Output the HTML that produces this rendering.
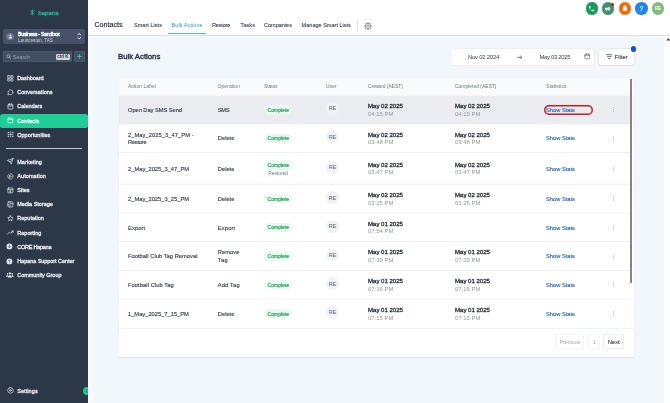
<!DOCTYPE html>
<html lang="en"><head><meta charset="utf-8"><title>Bulk Actions - Contacts</title>
<style>
html,body{margin:0;padding:0;}
body{width:670px;height:403px;overflow:hidden;position:relative;background:#f2f7fb;font-family:'Liberation Sans',sans-serif;}
.abs,.t,.row,.badge,.av,.kb,.ic{position:absolute;}
.t{white-space:pre;line-height:10px;height:10px;}
#side{left:0;top:0;width:88px;height:403px;background:#2c3848;}
#hdr{left:88px;top:0;width:582px;height:35px;background:#ffffff;border-bottom:1px solid #dcdfe4;}
#card{left:119px;top:79px;width:514.5px;height:278px;background:#fff;border-radius:1.5px;box-shadow:0 1px 1.6px rgba(40,60,90,0.11);}
#thead{left:119px;top:79px;width:514.5px;height:16.2px;background:#f8fafc;border-radius:1.5px 1.5px 0 0;}
.row{left:119px;width:514.5px;box-shadow:inset 0 -0.6px 0 #e4e7ec;}
.badge{left:264.4px;width:27.8px;height:9.4px;border-radius:4.7px;background:#eaf9f1;}
.av{left:326.1px;width:12.6px;height:12.6px;border-radius:6.3px;background:#f2f3f6;}
.kb{left:612.9px;width:1px;height:5.2px;}
.kb i{display:block;width:0.8px;height:0.9px;margin-bottom:1.1px;background:#a9afb9;border-radius:0.5px;}
.ic{left:6.6px;width:6.8px;height:6.8px;overflow:visible;}
.ic *{vector-effect:none;}
.circ{position:absolute;width:12.3px;height:12.3px;border-radius:6.2px;top:2.35px;}
#root{position:absolute;left:0;top:0;width:670px;height:403px;will-change:transform;}
</style></head><body><div id="root">
<!-- sidebar -->
<div id="side" class="abs"></div>
<div class="abs" style="left:0;top:113.6px;width:88px;height:14px;background:#1fce96;border-radius:2.5px;"></div>
<div class="abs" style="left:3px;top:28.6px;width:82px;height:15.6px;background:#475266;border-radius:2.5px;"></div>
<div class="abs" style="left:6.4px;top:33px;width:7.2px;height:7.2px;border-radius:3.6px;background:#6a7587;"></div>
<svg class="abs" style="left:7.6px;top:34.1px;width:4.8px;height:4.8px" viewBox="0 0 24 24"><circle cx="12" cy="8" r="5" fill="#d7dde6"/><path d="M3 22c0-6 4-9 9-9s9 3 9 9z" fill="#d7dde6"/></svg>
<svg class="abs" style="left:77.4px;top:32.4px;width:4.4px;height:8.4px" viewBox="0 0 8 16" fill="none" stroke="#ffffff" stroke-width="1.7" stroke-linecap="round" stroke-linejoin="round"><path d="M1.500 5.500 4 2.600 6.500 5.500M1.500 10.500 4 13.400 6.500 10.500"/></svg>
<div class="abs" style="left:3px;top:51px;width:68.8px;height:11px;background:#434e61;border-radius:2px;box-shadow:inset 0 0 0 0.6px #566176;"></div>
<svg class="abs" style="left:5.6px;top:53.8px;width:5.2px;height:5.2px" viewBox="0 0 24 24" fill="none" stroke="#b8c1ce" stroke-width="3" stroke-linecap="round"><circle cx="10.5" cy="10.5" r="7"/><path d="M16 16l6 6"/></svg>
<div class="abs" style="left:55.6px;top:53.6px;width:14.4px;height:6px;background:#cfd6e0;border-radius:1px;"></div>
<div class="abs" style="left:74.4px;top:51px;width:10.8px;height:11px;background:#434e61;border-radius:2px;box-shadow:inset 0 0 0 0.6px #566176;"></div>
<svg class="abs" style="left:77.3px;top:54px;width:4.8px;height:4.8px" viewBox="0 0 24 24" fill="none" stroke="#25d39a" stroke-width="5" stroke-linecap="round"><path d="M12 3v18M3 12h18"/></svg>
<div class="abs" style="left:6px;top:148.1px;width:76px;height:0.7px;background:#c3cad5;"></div>
<!-- logo mark -->
<svg class="abs" style="left:28.8px;top:9.4px;width:6.6px;height:6.6px" viewBox="0 0 24 24" fill="none" stroke="#1fb897" stroke-width="3.2" stroke-linecap="round"><path d="M12 3v19M12 12 4.500 5.500M12 12l7.500-6.500M12 13l-6 5M12 13l6 5"/></svg>
<svg class='ic' style='top:74.70px' viewBox='0 0 24 24' fill='none' stroke='#dde2ea' stroke-width='2.5' stroke-linecap='round' stroke-linejoin='round'><rect x='2.500' y='2.500' width='8' height='8' rx='1'/><rect x='13.500' y='2.500' width='8' height='8' rx='1'/><rect x='2.500' y='13.500' width='8' height='8' rx='1'/><rect x='13.500' y='13.500' width='8' height='8' rx='1'/></svg>
<svg class='ic' style='top:88.90px' viewBox='0 0 24 24' fill='none' stroke='#dde2ea' stroke-width='2.6' stroke-linecap='round' stroke-linejoin='round'><path d='M21 11.500a8.380 8.380 0 0 1-.900 3.800 8.500 8.500 0 0 1-7.600 4.700 8.380 8.380 0 0 1-3.800-.900L3 21l1.900-5.700a8.380 8.380 0 0 1-.900-3.800 8.500 8.500 0 0 1 4.700-7.600 8.380 8.380 0 0 1 3.800-.900h.500a8.480 8.480 0 0 1 8 8z'/></svg>
<svg class='ic' style='top:103.00px' viewBox='0 0 24 24' fill='none' stroke='#dde2ea' stroke-width='2.6' stroke-linecap='round' stroke-linejoin='round'><rect x='3.500' y='4.500' width='17' height='17' rx='2.500'/><path d='M3.500 10.500h17M8.500 2.500v4M15.500 2.500v4'/></svg>
<svg class='ic' style='top:117.20px' viewBox='0 0 24 24' fill='none' stroke='#e8fbf3' stroke-width='2.6' stroke-linecap='round' stroke-linejoin='round'><rect x='3.500' y='3.500' width='17' height='17' rx='2.500'/><path d='M3.500 9h17'/></svg>
<svg class='ic' style='top:131.30px' viewBox='0 0 24 24' fill='none' stroke='#dde2ea' stroke-width='2.5' stroke-linecap='round' stroke-linejoin='round'><circle cx='12' cy='12' r='2.200'/><circle cx='4.500' cy='5.500' r='1.400'/><circle cx='19.500' cy='5.500' r='1.400'/><circle cx='4.500' cy='18.500' r='1.400'/><circle cx='19.500' cy='18.500' r='1.400'/><path d='M12 3v3M12 18v3M3 12h3M18 12h3'/></svg>
<svg class='ic' style='top:158.20px' viewBox='0 0 24 24' fill='none' stroke='#dde2ea' stroke-width='2.5' stroke-linecap='round' stroke-linejoin='round'><path d='M21.500 2.500 10.500 13.500M21.500 2.500l-7 19-4-8-8-4z'/></svg>
<svg class='ic' style='top:172.50px' viewBox='0 0 24 24' fill='none' stroke='#dde2ea' stroke-width='2.5' stroke-linecap='round' stroke-linejoin='round'><path d='M5.280 5.280A9.500 9.500 0 1 0 12 2.500'/><path d='M10 8.500l5.500 3.500-5.500 3.500z'/></svg>
<svg class='ic' style='top:186.60px' viewBox='0 0 24 24' fill='none' stroke='#dde2ea' stroke-width='2.5' stroke-linecap='round' stroke-linejoin='round'><rect x='3' y='3.500' width='18' height='17' rx='2'/><path d='M3 8.500h18M12 11.500v6M9.200 15l2.800 2.800 2.800-2.800'/></svg>
<svg class='ic' style='top:200.80px' viewBox='0 0 24 24' fill='none' stroke='#dde2ea' stroke-width='2.5' stroke-linecap='round' stroke-linejoin='round'><rect x='3' y='3' width='18' height='18' rx='3'/><path d='M3 13.500h8v7.500M11 3v6.500h10'/></svg>
<svg class='ic' style='top:215.00px' viewBox='0 0 24 24' fill='none' stroke='#dde2ea' stroke-width='2.5' stroke-linecap='round' stroke-linejoin='round'><path d='M12 2.500l2.940 5.960 6.560.960-4.750 4.630 1.120 6.540L12 17.500l-5.870 3.090 1.120-6.540L2.500 9.420l6.560-.960z'/></svg>
<svg class='ic' style='top:229.20px' viewBox='0 0 24 24' fill='none' stroke='#dde2ea' stroke-width='2.6' stroke-linecap='round' stroke-linejoin='round'><path d='M2 17.500l6.500-6.500 4.500 4.500 8.500-8.500M16 7h5.500v5.500'/></svg>
<svg class='ic' style='top:243.40px;left:5.8px' viewBox='0 0 24 24'><circle cx='12' cy='12' r='10.300' fill='#e3e8ee'/><path d='M12 7v9M8.500 12.500l3.500 3.800 3.500-3.800' fill='none' stroke='#2d3748' stroke-width='2' stroke-linecap='round' stroke-linejoin='round'/></svg>
<svg class='ic' style='top:257.50px;left:5.8px' viewBox='0 0 24 24'><circle cx='12' cy='12' r='10.300' fill='#e3e8ee'/><path d='M9.300 9.500a2.800 2.800 0 1 1 4.200 2.400c-1 .600-1.500 1.200-1.500 2.300' fill='none' stroke='#2d3748' stroke-width='2' stroke-linecap='round'/><circle cx='12' cy='17.600' r='1.200' fill='#2d3748'/></svg>
<svg class='ic' style='top:271.40px;left:5.6px;width:7.8px;height:7.8px' viewBox='0 0 24 24' fill='#e3e8ee'><circle cx='12' cy='7.500' r='3.400'/><circle cx='4.800' cy='8.800' r='2.500'/><circle cx='19.200' cy='8.800' r='2.500'/><path d='M6 20c0-4.300 2.600-6.800 6-6.800s6 2.500 6 6.800zM0.500 18.500c0-3.400 1.900-5.300 4.300-5.300.8 0 1.500.2 2.100.500C5.300 15 4.500 17 4.400 18.500zM23.500 18.500c0-3.400-1.900-5.300-4.300-5.300-.8 0-1.500.2-2.100.500C18.700 15 19.500 17 19.600 18.500z'/></svg>
<svg class='ic' style='top:387.00px' viewBox='0 0 24 24' fill='none' stroke='#dde2ea' stroke-width='2.5' stroke-linecap='round' stroke-linejoin='round'><path d='M12 2.200l2.300 1.700 2.800-.300 1.200 2.600 2.600 1.200-.300 2.800 1.700 2.300-1.700 2.300.300 2.800-2.600 1.200-1.200 2.600-2.800-.300L12 22.800l-2.300-1.700-2.800.300-1.200-2.600-2.600-1.200.300-2.800L1.700 12.500l1.700-2.300-.300-2.800 2.600-1.200 1.200-2.600 2.800.300z' transform='translate(0.300,-0.500)'/><circle cx='12' cy='12' r='3.200'/></svg>
<!-- collapse -->
<div class="abs" style="left:83.2px;top:386.8px;width:7.8px;height:7.8px;border-radius:3.9px;background:#22c58b;"></div>
<svg class="abs" style="left:85.2px;top:388.7px;width:3.6px;height:4px" viewBox="0 0 9 10" fill="none" stroke="#0e7d57" stroke-width="1.6" stroke-linecap="round" stroke-linejoin="round"><path d="M6 1.5 2.6 5 6 8.5"/></svg>
<div class="abs" style="left:88px;top:36px;width:6px;height:367px;background:linear-gradient(90deg,#f8fbfd 0%,#f7fafc 50%,#f2f7fb 100%);"></div>
<!-- header -->
<div id="hdr" class="abs"></div>
<div class="abs" style="left:168px;top:32.8px;width:37.6px;height:0.8px;background:#5fb0de;"></div>
<div class="abs" style="left:357.2px;top:19.8px;width:0.7px;height:11.9px;background:#e4e7ea;"></div>
<svg class="abs" style="left:364.3px;top:21.9px;width:8px;height:8px" viewBox="0 0 24 24" fill="none" stroke="#5f6670"><circle cx="12" cy="12" r="7.6" stroke-width="2.2"/><path d="M20.50 12.00L23.00 12.00M18.01 18.01L19.78 19.78M12.00 20.50L12.00 23.00M5.99 18.01L4.22 19.78M3.50 12.00L1.00 12.00M5.99 5.99L4.22 4.22M12.00 3.50L12.00 1.00M18.01 5.99L19.78 4.22" stroke-width="3" stroke-linecap="butt"/><circle cx="12" cy="12" r="2.4" stroke-width="1.8"/></svg>
<div class="circ" style="left:585.55px;background:#199a5b;box-shadow:inset 0 0 0 0.7px #35ab70;"></div>
<div class="circ" style="left:601.8px;background:#3f8d6b;box-shadow:inset 0 0 0 0.8px #62a987;"></div>
<div class="circ" style="left:618.7px;background:#ef690c;box-shadow:inset 0 0 0 0.8px #f49038;"></div>
<div class="circ" style="left:635.25px;background:#1f86e8;"></div>
<div class="circ" style="left:651.85px;background:#84ba7e;"></div>
<div class="abs" style="left:611px;top:2.7px;width:3.2px;height:3.2px;border-radius:1.6px;background:#c4161c;"></div>
<svg class="abs" style="left:588.1px;top:4.9px;width:7.2px;height:7.2px" viewBox="0 0 24 24" fill="#c4ecd6"><path d="M6.6 10.8c1.4 2.8 3.8 5.1 6.600 6.600l2.200-2.200c.3-.3.700-.4 1-.2 1.100.4 2.300.6 3.600.6.600 0 1 .4 1 1V20c0 .6-.4 1-1 1C10.600 21 3 13.400 3 4c0-.6.400-1 1-1h3.500c.6 0 1 .4 1 1 0 1.300.2 2.500.6 3.600.1.300 0 .700-.2 1z"/></svg>
<svg class="abs" style="left:604.2px;top:4.9px;width:7.6px;height:7.6px" viewBox="0 0 24 24" fill="#e9f7ef"><path d="M3 9v6h3l1.500 5h3L9.200 15H11l7 4V5l-7 4zM20 9.500v5c1-.5 1.700-1.400 1.700-2.500S21 10 20 9.500z"/></svg>
<svg class="abs" style="left:621px;top:4.4px;width:8px;height:8.2px" viewBox="0 0 24 24" fill="#fff3e6"><path d="M12 22c1.100 0 2-.9 2-2h-4c0 1.100.9 2 2 2zm6-6v-5c0-3.100-1.600-5.600-4.500-6.300V4c0-.800-.7-1.500-1.500-1.500S10.500 3.200 10.500 4v.7C7.600 5.400 6 7.900 6 11v5l-2 2v1h16v-1z"/></svg>
<!-- page scrollbar -->
<div class="abs" style="left:664px;top:35.8px;width:6px;height:367.2px;background:#fcfdfe;"></div>
<svg class="abs" style="left:665.7px;top:38.3px;width:4.6px;height:2.6px" viewBox="0 0 10 6"><path d="M0 6 5 0l5 6z" fill="#4a4a4a"/></svg>
<!-- toolbar -->
<div class="abs" style="left:450.6px;top:48.7px;width:143.8px;height:16.5px;background:#fff;border-radius:2.2px;box-shadow:0 0 0 0.5px #e6e9ee;"></div>
<svg class="abs" style="left:516.8px;top:54.6px;width:5.4px;height:4.6px" viewBox="0 0 12 10" fill="none" stroke="#3d4552" stroke-width="1.5" stroke-linecap="round" stroke-linejoin="round"><path d="M1 5h10M7.500 1.500 11 5 7.500 8.500"/></svg>
<svg class="abs" style="left:583.6px;top:53.3px;width:6.4px;height:6.4px" viewBox="0 0 24 24" fill="none" stroke="#4d5562" stroke-width="2.2"><rect x="3" y="4.5" width="18" height="17" rx="2.5"/><path d="M3 10h18M8 2.500v3M16 2.500v3" stroke-linecap="round"/></svg>
<div class="abs" style="left:599px;top:48.8px;width:34.8px;height:16.4px;background:#fff;border-radius:2.2px;box-shadow:0 0 0 0.6px #d9dde3,0 0.5px 1px rgba(0,0,0,0.05);"></div>
<svg class="abs" style="left:605.8px;top:54.2px;width:6.6px;height:5.2px" viewBox="0 0 14 11" fill="none" stroke="#3d4552" stroke-width="1.6" stroke-linecap="round"><path d="M1 1.500h12M3.200 5.500h7.600M5.400 9.500h3.200"/></svg>
<div class="abs" style="left:630.6px;top:46.2px;width:5.6px;height:5.6px;border-radius:2.8px;background:#0f52d9;"></div>
<!-- table -->
<div id="card" class="abs"></div>
<svg class='abs' style='left:119px;top:79px;width:514.5px;height:278px' viewBox='0 0 514.5 278'>
<rect x='0' y='0' width='514.5' height='16.8' fill='#f8fafc'/>
<rect x='0' y='16.8' width='514.5' height='28.5' fill='#ebecef'/>
<rect x='0' y='73.15' width='514.5' height='0.9' fill='#eceff3'/>
<rect x='0' y='104.75' width='514.5' height='0.9' fill='#eceff3'/>
<rect x='0' y='133.55' width='514.5' height='0.9' fill='#eceff3'/>
<rect x='0' y='162.05' width='514.5' height='0.9' fill='#eceff3'/>
<rect x='0' y='191.05' width='514.5' height='0.9' fill='#eceff3'/>
<rect x='0' y='219.55' width='514.5' height='0.9' fill='#eceff3'/>
<rect x='0' y='248.85' width='514.5' height='0.9' fill='#eceff3'/>
</svg>
<div class="abs" style="left:629.7px;top:79px;width:3.8px;height:248.8px;background:#fdfdfe;"></div>
<div class="abs" style="left:629.9px;top:79px;width:2.3px;height:204.3px;background:#858585;"></div>
<!-- pagination -->
<div class="abs" style="left:555px;top:334.4px;width:29.4px;height:14.6px;border-radius:3px;box-shadow:inset 0 0 0 0.6px #e9ecf0;"></div>
<div class="abs" style="left:588.4px;top:334.4px;width:12px;height:14.6px;border-radius:3px;box-shadow:inset 0 0 0 0.6px #e9ecf0;"></div>
<div class="abs" style="left:603.4px;top:334.4px;width:21px;height:14.6px;border-radius:3px;box-shadow:inset 0 0 0 0.6px #dadee4;"></div>
<!-- annotation -->
<div class="abs" style="left:544.2px;top:104.6px;width:48.4px;height:10.8px;border-radius:5.4px;box-shadow:inset 0 0 0 1.5px #c4202a;"></div>
<span class='t' style="left:38.30px;top:7.70px;font-size:6.143px;font-weight:400;color:#22b799;-webkit-text-stroke:0.3px #22b799;">hapana</span>
<span class='t' style="left:18.00px;top:29.10px;font-size:5.350px;font-weight:400;color:#ffffff;letter-spacing:-0.328px;-webkit-text-stroke:0.36px #fff;">Business - Sandbox</span>
<span class='t' style="left:18.00px;top:35.60px;font-size:4.618px;font-weight:400;color:#cbd2dc;">Launceston, TAS</span>
<span class='t' style="left:13.00px;top:51.60px;font-size:5.365px;font-weight:400;color:#9aa5b5;">Search</span>
<span class='t' style="left:17.20px;top:73.00px;font-size:5.541px;font-weight:400;color:#eef1f5;letter-spacing:-0.088px;-webkit-text-stroke:0.28px #eef1f5;">Dashboard</span>
<span class='t' style="left:17.20px;top:87.20px;font-size:5.541px;font-weight:400;color:#eef1f5;-webkit-text-stroke:0.28px #eef1f5;">Conversations</span>
<span class='t' style="left:17.20px;top:101.30px;font-size:5.541px;font-weight:400;color:#eef1f5;letter-spacing:-0.032px;-webkit-text-stroke:0.28px #eef1f5;">Calendars</span>
<span class='t' style="left:17.20px;top:115.60px;font-size:5.541px;font-weight:400;color:#ffffff;letter-spacing:0.048px;-webkit-text-stroke:0.28px #ffffff;">Contacts</span>
<span class='t' style="left:17.20px;top:129.70px;font-size:5.541px;font-weight:400;color:#eef1f5;letter-spacing:0.020px;-webkit-text-stroke:0.28px #eef1f5;">Opportunities</span>
<span class='t' style="left:17.20px;top:156.60px;font-size:5.541px;font-weight:400;color:#eef1f5;letter-spacing:0.059px;-webkit-text-stroke:0.28px #eef1f5;">Marketing</span>
<span class='t' style="left:17.20px;top:170.90px;font-size:5.541px;font-weight:400;color:#eef1f5;letter-spacing:0.086px;-webkit-text-stroke:0.28px #eef1f5;">Automation</span>
<span class='t' style="left:17.20px;top:185.00px;font-size:5.541px;font-weight:400;color:#eef1f5;letter-spacing:0.020px;-webkit-text-stroke:0.28px #eef1f5;">Sites</span>
<span class='t' style="left:17.20px;top:199.20px;font-size:5.541px;font-weight:400;color:#eef1f5;letter-spacing:-0.020px;-webkit-text-stroke:0.28px #eef1f5;">Media Storage</span>
<span class='t' style="left:17.20px;top:213.40px;font-size:5.541px;font-weight:400;color:#eef1f5;-webkit-text-stroke:0.28px #eef1f5;">Reputation</span>
<span class='t' style="left:17.20px;top:227.60px;font-size:5.541px;font-weight:400;color:#eef1f5;letter-spacing:0.022px;-webkit-text-stroke:0.28px #eef1f5;">Reporting</span>
<span class='t' style="left:17.20px;top:241.80px;font-size:5.541px;font-weight:400;color:#eef1f5;letter-spacing:-0.256px;-webkit-text-stroke:0.28px #eef1f5;">CORE Hapana</span>
<span class='t' style="left:17.20px;top:255.90px;font-size:5.541px;font-weight:400;color:#eef1f5;letter-spacing:-0.066px;-webkit-text-stroke:0.28px #eef1f5;">Hapana Support Center</span>
<span class='t' style="left:17.20px;top:270.00px;font-size:5.541px;font-weight:400;color:#eef1f5;letter-spacing:-0.040px;-webkit-text-stroke:0.28px #eef1f5;">Community Group</span>
<span class='t' style="left:17.20px;top:385.50px;font-size:5.541px;font-weight:400;color:#eef1f5;letter-spacing:0.069px;-webkit-text-stroke:0.28px #eef1f5;">Settings</span>
<span class='t' style="left:94.40px;top:19.80px;font-size:7.146px;font-weight:400;color:#1f2733;-webkit-text-stroke:0.15px #1f2733;">Contacts</span>
<span class='t' style="left:134.00px;top:20.40px;font-size:5.577px;font-weight:400;color:#39414e;letter-spacing:0.011px;-webkit-text-stroke:0.1px #39414e;">Smart Lists</span>
<span class='t' style="left:171.60px;top:20.40px;font-size:5.577px;font-weight:400;color:#2f9bd6;letter-spacing:0.038px;">Bulk Actions</span>
<span class='t' style="left:212.00px;top:20.40px;font-size:5.577px;font-weight:400;color:#39414e;letter-spacing:-0.188px;-webkit-text-stroke:0.1px #39414e;">Restore</span>
<span class='t' style="left:240.60px;top:20.40px;font-size:5.577px;font-weight:400;color:#39414e;letter-spacing:0.036px;-webkit-text-stroke:0.1px #39414e;">Tasks</span>
<span class='t' style="left:264.00px;top:20.40px;font-size:5.577px;font-weight:400;color:#39414e;letter-spacing:-0.026px;-webkit-text-stroke:0.1px #39414e;">Companies</span>
<span class='t' style="left:301.60px;top:20.40px;font-size:5.577px;font-weight:400;color:#39414e;letter-spacing:-0.011px;-webkit-text-stroke:0.1px #39414e;">Manage Smart Lists</span>
<span class='t' style="left:654.80px;top:3.60px;font-size:4.607px;font-weight:400;color:#f1f8ef;-webkit-text-stroke:0.2px #f1f8ef;">RE</span>
<span class='t' style="left:639.50px;top:3.60px;font-size:6.384px;font-weight:700;color:#f3f8fe;">?</span>
<span class='t' style="left:118.00px;top:51.60px;font-size:7.784px;font-weight:400;color:#2b3340;-webkit-text-stroke:0.38px #2b3340;">Bulk Actions</span>
<span class='t' style="left:468.00px;top:52.00px;font-size:5.900px;font-weight:400;color:#363e4b;letter-spacing:-0.216px;">Nov 02 2024</span>
<span class='t' style="left:539.40px;top:52.00px;font-size:5.900px;font-weight:400;color:#363e4b;letter-spacing:-0.291px;">May 03 2025</span>
<span class='t' style="left:614.60px;top:51.70px;font-size:5.850px;font-weight:400;color:#3d4552;-webkit-text-stroke:0.14px #3d4552;">Filter</span>
<span class='t' style="left:128.00px;top:81.90px;font-size:4.957px;font-weight:400;color:#6f7786;letter-spacing:0.065px;">Action Label</span>
<span class='t' style="left:217.60px;top:81.90px;font-size:4.957px;font-weight:400;color:#6f7786;letter-spacing:0.079px;">Operation</span>
<span class='t' style="left:264.00px;top:81.90px;font-size:4.957px;font-weight:400;color:#6f7786;letter-spacing:-0.091px;">Status</span>
<span class='t' style="left:326.00px;top:81.90px;font-size:4.957px;font-weight:400;color:#6f7786;letter-spacing:-0.022px;">User</span>
<span class='t' style="left:368.00px;top:81.90px;font-size:4.957px;font-weight:400;color:#6f7786;letter-spacing:-0.020px;">Created (AEST)</span>
<span class='t' style="left:455.00px;top:81.90px;font-size:4.957px;font-weight:400;color:#6f7786;">Completed (AEST)</span>
<span class='t' style="left:546.00px;top:81.90px;font-size:4.957px;font-weight:400;color:#6f7786;letter-spacing:0.085px;">Statistics</span>
<span class='t' style="left:128.00px;top:104.75px;font-size:5.754px;font-weight:400;color:#2f3744;letter-spacing:-0.063px;-webkit-text-stroke:0.12px #2f3744;">Open Day SMS Send</span>
<span class='t' style="left:217.80px;top:104.75px;font-size:5.754px;font-weight:400;color:#2f3744;letter-spacing:-0.334px;-webkit-text-stroke:0.12px #2f3744;">SMS</span>
<div class='badge' style='top:104.85px'></div>
<span class='t' style="left:267.60px;top:104.55px;font-size:5.000px;font-weight:400;color:#249c59;-webkit-text-stroke:0.16px #249c59;">Complete</span>
<div class='av' style='top:102.15px'></div>
<span class='t' style="left:328.80px;top:103.45px;font-size:5.500px;font-weight:400;color:#5b6370;letter-spacing:-0.241px;">RE</span>
<span class='t' style="left:368.00px;top:100.95px;font-size:6.053px;font-weight:400;color:#262d38;-webkit-text-stroke:0.3px #262d38;">May 02 2025</span>
<span class='t' style="left:368.00px;top:108.55px;font-size:5.981px;font-weight:400;color:#9299a4;">04:15 PM</span>
<span class='t' style="left:455.00px;top:100.95px;font-size:6.053px;font-weight:400;color:#262d38;-webkit-text-stroke:0.3px #262d38;">May 02 2025</span>
<span class='t' style="left:455.00px;top:108.55px;font-size:5.981px;font-weight:400;color:#9299a4;">04:15 PM</span>
<span class='t' style="left:546.00px;top:104.75px;font-size:5.733px;font-weight:400;color:#1c5bbf;-webkit-text-stroke:0.12px #1c5bbf;">Show Stats</span>
<div class='kb' style='top:107.15px'><i></i><i></i><i></i></div>
<span class='t' style="left:128.00px;top:129.55px;font-size:5.754px;font-weight:400;color:#2f3744;letter-spacing:0.052px;-webkit-text-stroke:0.12px #2f3744;">2_May_2025_3_47_PM -</span>
<span class='t' style="left:128.00px;top:137.35px;font-size:5.754px;font-weight:400;color:#2f3744;letter-spacing:-0.258px;-webkit-text-stroke:0.12px #2f3744;">Restore</span>
<span class='t' style="left:217.80px;top:133.45px;font-size:5.754px;font-weight:400;color:#2f3744;letter-spacing:-0.006px;-webkit-text-stroke:0.12px #2f3744;">Delete</span>
<div class='badge' style='top:133.55px'></div>
<span class='t' style="left:267.60px;top:133.25px;font-size:5.000px;font-weight:400;color:#249c59;-webkit-text-stroke:0.16px #249c59;">Complete</span>
<div class='av' style='top:130.85px'></div>
<span class='t' style="left:328.80px;top:132.15px;font-size:5.500px;font-weight:400;color:#5b6370;letter-spacing:-0.241px;">RE</span>
<span class='t' style="left:368.00px;top:129.65px;font-size:6.053px;font-weight:400;color:#262d38;-webkit-text-stroke:0.3px #262d38;">May 02 2025</span>
<span class='t' style="left:368.00px;top:137.25px;font-size:5.981px;font-weight:400;color:#9299a4;">03:48 PM</span>
<span class='t' style="left:455.00px;top:129.65px;font-size:6.053px;font-weight:400;color:#262d38;-webkit-text-stroke:0.3px #262d38;">May 02 2025</span>
<span class='t' style="left:455.00px;top:137.25px;font-size:5.981px;font-weight:400;color:#9299a4;">03:48 PM</span>
<span class='t' style="left:546.00px;top:133.45px;font-size:5.733px;font-weight:400;color:#1c5bbf;-webkit-text-stroke:0.12px #1c5bbf;">Show Stats</span>
<div class='kb' style='top:135.85px'><i></i><i></i><i></i></div>
<span class='t' style="left:128.00px;top:163.65px;font-size:5.754px;font-weight:400;color:#2f3744;-webkit-text-stroke:0.12px #2f3744;">2_May_2025_3_47_PM</span>
<span class='t' style="left:217.80px;top:163.65px;font-size:5.754px;font-weight:400;color:#2f3744;letter-spacing:-0.006px;-webkit-text-stroke:0.12px #2f3744;">Delete</span>
<div class='badge' style='top:160.35px'></div>
<span class='t' style="left:267.60px;top:160.05px;font-size:5.000px;font-weight:400;color:#249c59;-webkit-text-stroke:0.16px #249c59;">Complete</span>
<span class='t' style="left:268.20px;top:169.35px;font-size:4.929px;font-weight:400;color:#6f7786;">Restored</span>
<div class='av' style='top:161.05px'></div>
<span class='t' style="left:328.80px;top:162.35px;font-size:5.500px;font-weight:400;color:#5b6370;letter-spacing:-0.241px;">RE</span>
<span class='t' style="left:368.00px;top:159.85px;font-size:6.053px;font-weight:400;color:#262d38;-webkit-text-stroke:0.3px #262d38;">May 02 2025</span>
<span class='t' style="left:368.00px;top:167.45px;font-size:5.981px;font-weight:400;color:#9299a4;">03:47 PM</span>
<span class='t' style="left:455.00px;top:159.85px;font-size:6.053px;font-weight:400;color:#262d38;-webkit-text-stroke:0.3px #262d38;">May 02 2025</span>
<span class='t' style="left:455.00px;top:167.45px;font-size:5.981px;font-weight:400;color:#9299a4;">03:47 PM</span>
<span class='t' style="left:546.00px;top:163.65px;font-size:5.733px;font-weight:400;color:#1c5bbf;-webkit-text-stroke:0.12px #1c5bbf;">Show Stats</span>
<div class='kb' style='top:166.05px'><i></i><i></i><i></i></div>
<span class='t' style="left:128.00px;top:193.85px;font-size:5.754px;font-weight:400;color:#2f3744;-webkit-text-stroke:0.12px #2f3744;">2_May_2025_3_25_PM</span>
<span class='t' style="left:217.80px;top:193.85px;font-size:5.754px;font-weight:400;color:#2f3744;letter-spacing:-0.006px;-webkit-text-stroke:0.12px #2f3744;">Delete</span>
<div class='badge' style='top:193.95px'></div>
<span class='t' style="left:267.60px;top:193.65px;font-size:5.000px;font-weight:400;color:#249c59;-webkit-text-stroke:0.16px #249c59;">Complete</span>
<div class='av' style='top:191.25px'></div>
<span class='t' style="left:328.80px;top:192.55px;font-size:5.500px;font-weight:400;color:#5b6370;letter-spacing:-0.241px;">RE</span>
<span class='t' style="left:368.00px;top:190.05px;font-size:6.053px;font-weight:400;color:#262d38;-webkit-text-stroke:0.3px #262d38;">May 02 2025</span>
<span class='t' style="left:368.00px;top:197.65px;font-size:5.981px;font-weight:400;color:#9299a4;">03:25 PM</span>
<span class='t' style="left:455.00px;top:190.05px;font-size:6.053px;font-weight:400;color:#262d38;-webkit-text-stroke:0.3px #262d38;">May 02 2025</span>
<span class='t' style="left:455.00px;top:197.65px;font-size:5.981px;font-weight:400;color:#9299a4;">03:26 PM</span>
<span class='t' style="left:546.00px;top:193.85px;font-size:5.733px;font-weight:400;color:#1c5bbf;-webkit-text-stroke:0.12px #1c5bbf;">Show Stats</span>
<div class='kb' style='top:196.25px'><i></i><i></i><i></i></div>
<span class='t' style="left:128.00px;top:222.55px;font-size:5.754px;font-weight:400;color:#2f3744;letter-spacing:0.094px;-webkit-text-stroke:0.12px #2f3744;">Export</span>
<span class='t' style="left:217.80px;top:222.55px;font-size:5.754px;font-weight:400;color:#2f3744;letter-spacing:0.154px;-webkit-text-stroke:0.12px #2f3744;">Export</span>
<div class='badge' style='top:222.65px'></div>
<span class='t' style="left:267.60px;top:222.35px;font-size:5.000px;font-weight:400;color:#249c59;-webkit-text-stroke:0.16px #249c59;">Complete</span>
<div class='av' style='top:219.95px'></div>
<span class='t' style="left:328.80px;top:221.25px;font-size:5.500px;font-weight:400;color:#5b6370;letter-spacing:-0.241px;">RE</span>
<span class='t' style="left:368.00px;top:218.75px;font-size:6.053px;font-weight:400;color:#262d38;-webkit-text-stroke:0.3px #262d38;">May 01 2025</span>
<span class='t' style="left:368.00px;top:226.35px;font-size:5.981px;font-weight:400;color:#9299a4;">07:54 PM</span>
<span class='t' style="left:546.00px;top:222.55px;font-size:5.733px;font-weight:400;color:#1c5bbf;-webkit-text-stroke:0.12px #1c5bbf;">Show Stats</span>
<div class='kb' style='top:224.95px'><i></i><i></i><i></i></div>
<span class='t' style="left:128.00px;top:251.25px;font-size:5.754px;font-weight:400;color:#2f3744;letter-spacing:0.022px;-webkit-text-stroke:0.12px #2f3744;">Football Club Tag Removal</span>
<span class='t' style="left:217.80px;top:247.25px;font-size:5.754px;font-weight:400;color:#2f3744;letter-spacing:0.035px;-webkit-text-stroke:0.12px #2f3744;">Remove</span>
<span class='t' style="left:217.80px;top:255.25px;font-size:5.754px;font-weight:400;color:#2f3744;letter-spacing:0.262px;-webkit-text-stroke:0.12px #2f3744;">Tag</span>
<div class='badge' style='top:251.35px'></div>
<span class='t' style="left:267.60px;top:251.05px;font-size:5.000px;font-weight:400;color:#249c59;-webkit-text-stroke:0.16px #249c59;">Complete</span>
<div class='av' style='top:248.65px'></div>
<span class='t' style="left:328.80px;top:249.95px;font-size:5.500px;font-weight:400;color:#5b6370;letter-spacing:-0.241px;">RE</span>
<span class='t' style="left:368.00px;top:247.45px;font-size:6.053px;font-weight:400;color:#262d38;-webkit-text-stroke:0.3px #262d38;">May 01 2025</span>
<span class='t' style="left:368.00px;top:255.05px;font-size:5.981px;font-weight:400;color:#9299a4;">07:39 PM</span>
<span class='t' style="left:455.00px;top:247.45px;font-size:6.053px;font-weight:400;color:#262d38;-webkit-text-stroke:0.3px #262d38;">May 01 2025</span>
<span class='t' style="left:455.00px;top:255.05px;font-size:5.981px;font-weight:400;color:#9299a4;">07:39 PM</span>
<span class='t' style="left:546.00px;top:251.25px;font-size:5.733px;font-weight:400;color:#1c5bbf;-webkit-text-stroke:0.12px #1c5bbf;">Show Stats</span>
<div class='kb' style='top:253.65px'><i></i><i></i><i></i></div>
<span class='t' style="left:128.00px;top:280.00px;font-size:5.754px;font-weight:400;color:#2f3744;letter-spacing:0.070px;-webkit-text-stroke:0.12px #2f3744;">Football Club Tag</span>
<span class='t' style="left:217.80px;top:280.00px;font-size:5.754px;font-weight:400;color:#2f3744;letter-spacing:0.132px;-webkit-text-stroke:0.12px #2f3744;">Add Tag</span>
<div class='badge' style='top:280.10px'></div>
<span class='t' style="left:267.60px;top:279.80px;font-size:5.000px;font-weight:400;color:#249c59;-webkit-text-stroke:0.16px #249c59;">Complete</span>
<div class='av' style='top:277.40px'></div>
<span class='t' style="left:328.80px;top:278.70px;font-size:5.500px;font-weight:400;color:#5b6370;letter-spacing:-0.241px;">RE</span>
<span class='t' style="left:368.00px;top:276.20px;font-size:6.053px;font-weight:400;color:#262d38;-webkit-text-stroke:0.3px #262d38;">May 01 2025</span>
<span class='t' style="left:368.00px;top:283.80px;font-size:5.981px;font-weight:400;color:#9299a4;">07:16 PM</span>
<span class='t' style="left:455.00px;top:276.20px;font-size:6.053px;font-weight:400;color:#262d38;-webkit-text-stroke:0.3px #262d38;">May 01 2025</span>
<span class='t' style="left:455.00px;top:283.80px;font-size:5.981px;font-weight:400;color:#9299a4;">07:16 PM</span>
<span class='t' style="left:546.00px;top:280.00px;font-size:5.733px;font-weight:400;color:#1c5bbf;-webkit-text-stroke:0.12px #1c5bbf;">Show Stats</span>
<div class='kb' style='top:282.40px'><i></i><i></i><i></i></div>
<span class='t' style="left:128.00px;top:308.70px;font-size:5.754px;font-weight:400;color:#2f3744;letter-spacing:-0.012px;-webkit-text-stroke:0.12px #2f3744;">1_May_2025_7_15_PM</span>
<span class='t' style="left:217.80px;top:308.70px;font-size:5.754px;font-weight:400;color:#2f3744;letter-spacing:-0.006px;-webkit-text-stroke:0.12px #2f3744;">Delete</span>
<div class='badge' style='top:308.80px'></div>
<span class='t' style="left:267.60px;top:308.50px;font-size:5.000px;font-weight:400;color:#249c59;-webkit-text-stroke:0.16px #249c59;">Complete</span>
<div class='av' style='top:306.10px'></div>
<span class='t' style="left:328.80px;top:307.40px;font-size:5.500px;font-weight:400;color:#5b6370;letter-spacing:-0.241px;">RE</span>
<span class='t' style="left:368.00px;top:304.90px;font-size:6.053px;font-weight:400;color:#262d38;-webkit-text-stroke:0.3px #262d38;">May 01 2025</span>
<span class='t' style="left:368.00px;top:312.50px;font-size:5.981px;font-weight:400;color:#9299a4;">07:15 PM</span>
<span class='t' style="left:455.00px;top:304.90px;font-size:6.053px;font-weight:400;color:#262d38;-webkit-text-stroke:0.3px #262d38;">May 01 2025</span>
<span class='t' style="left:455.00px;top:312.50px;font-size:5.981px;font-weight:400;color:#9299a4;">07:15 PM</span>
<span class='t' style="left:546.00px;top:308.70px;font-size:5.733px;font-weight:400;color:#1c5bbf;-webkit-text-stroke:0.12px #1c5bbf;">Show Stats</span>
<div class='kb' style='top:311.10px'><i></i><i></i><i></i></div>
<span class='t' style="left:559.40px;top:336.80px;font-size:5.600px;font-weight:400;color:#a3a9b3;letter-spacing:-0.112px;">Previous</span>
<span class='t' style="left:592.90px;top:336.80px;font-size:5.600px;font-weight:400;color:#a3a9b3;">1</span>
<span class='t' style="left:608.00px;top:336.80px;font-size:5.600px;font-weight:400;color:#2f3744;letter-spacing:0.028px;-webkit-text-stroke:0.1px #2f3744;">Next</span>
<span class='t' style="left:57.20px;top:51.70px;font-size:4.460px;font-weight:700;color:#2d3748;">ctrl K</span>
</div></body></html>
